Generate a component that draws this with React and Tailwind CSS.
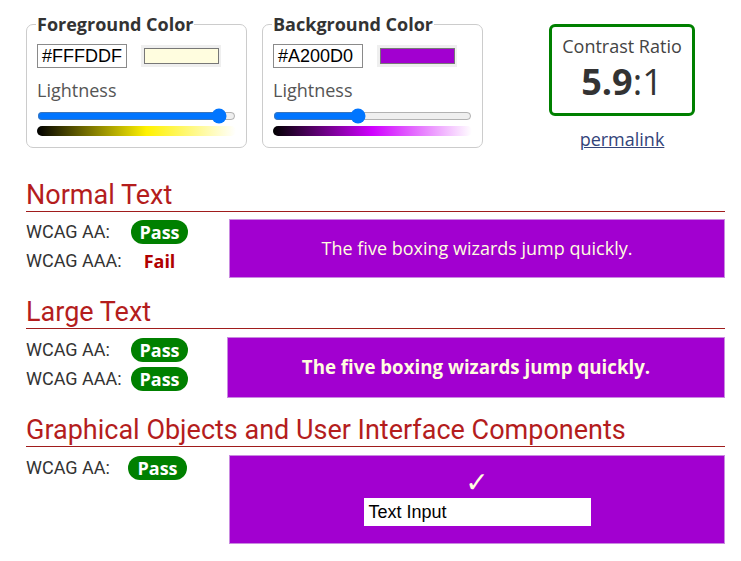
import React from "react";

function ColorField({ legend, hex, color, value, gradient }) {
  return (
    <fieldset className="w-[221px] border border-[#cccccc] rounded-[7px] pl-[10px] pr-[10px] pb-[11px] pt-0 m-0">
      <legend className="px-[1px] -ml-[1px] text-[18px] leading-[22px] font-bold text-[#333333] font-['Open_Sans',sans-serif]">
        {legend}
      </legend>
      <div className="flex items-center gap-[14px] mt-[9px]">
        <div className="w-[90px] h-[24px] border border-[#8a8a8a] flex items-center pl-[4px] text-[18px] text-black font-['Liberation_Sans',Arial,sans-serif]">
          {hex}
        </div>
        <div className="w-[80px] h-[22px] bg-[#efefef] flex items-center justify-center">
          <div className="w-[75px] h-[16px] border border-[#777777]" style={{ background: color }} />
        </div>
      </div>
      <div className="mt-[10px] text-[18px] leading-[24px] text-[#555555] font-['Open_Sans',sans-serif]">Lightness</div>
      <input
        type="range"
        min="0"
        max="100"
        defaultValue={value}
        className="block w-[199px] h-[16px] m-0 mt-[6px] accent-[#0075ff]"
      />
      <div className="w-[199px] h-[10px] rounded-[5px] mt-[2px]" style={{ background: gradient }} />
    </fieldset>
  );
}

function Badge({ children }) {
  return (
    <div className="w-[57px] h-[24px] rounded-full bg-[#008000] text-white font-bold text-[18px] leading-[24px] text-center font-['Open_Sans',sans-serif]">
      {children}
    </div>
  );
}

function Fail() {
  return (
    <div className="w-[57px] h-[24px] text-[#b00000] font-bold text-[18px] leading-[24px] text-center font-['Open_Sans',sans-serif]">
      Fail
    </div>
  );
}

function Heading({ children, className = "" }) {
  return (
    <div className={"border-b border-[#a01c1c] text-[27px] leading-[32px] text-[#b41d1d] font-['Roboto',sans-serif] " + className}>
      {children}
    </div>
  );
}

function Label({ children }) {
  return (
    <div className="w-[105px] text-[18px] leading-[24px] text-[#333333] font-['Roboto',sans-serif]">{children}</div>
  );
}

export default function App() {
  return (
    <div className="w-[741px] h-[561px] bg-white overflow-hidden font-['Open_Sans',sans-serif]">
      <div className="flex items-start pl-[26px] pt-[13px]">
        <ColorField
          legend="Foreground Color"
          hex="#FFFDDF"
          color="#FFFDDF"
          value={95}
          gradient="linear-gradient(to right, #000000, #fff200 55%, #ffffff)"
        />
        <div className="w-[15px]" />
        <ColorField
          legend="Background Color"
          hex="#A200D0"
          color="#A200D0"
          value={42}
          gradient="linear-gradient(to right, #000000, #d000ff 50%, #ffffff)"
        />
        <div className="ml-[66px] flex flex-col items-center pt-[11px]">
          <div className="w-[146px] h-[92px] border-[3px] border-[#008000] rounded-[6px] flex flex-col items-center">
            <div className="mt-[7px] text-[18px] leading-[24px] text-[#444444]">Contrast Ratio</div>
            <div className="text-[36px] leading-[40px] text-[#333333] mt-[4px]">
              <span className="font-bold">5.9</span>:1
            </div>
          </div>
          <a className="mt-[11px] text-[18px] leading-[24px] text-[#33447a] underline">permalink</a>
        </div>
      </div>

      <div className="pl-[26px] pr-[16px]">
        <Heading className="mt-[28px]">Normal Text</Heading>
        <div className="flex mt-[7px]">
          <div className="w-[203px] flex flex-col gap-[5px] pt-[1px]">
            <div className="flex items-center">
              <Label>WCAG AA:</Label>
              <Badge>Pass</Badge>
            </div>
            <div className="flex items-center">
              <Label>WCAG AAA:</Label>
              <Fail />
            </div>
          </div>
          <div className="flex-1 h-[59px] bg-[#A200D0] border border-[#c98ae0] flex items-center justify-center text-[18px] text-[#FFFDDF]">
            The five boxing wizards jump quickly.
          </div>
        </div>

        <Heading className="mt-[18px]">Large Text</Heading>
        <div className="flex mt-[8px]">
          <div className="w-[201px] flex flex-col gap-[5px] pt-[1px]">
            <div className="flex items-center">
              <Label>WCAG AA:</Label>
              <Badge>Pass</Badge>
            </div>
            <div className="flex items-center">
              <Label>WCAG AAA:</Label>
              <Badge>Pass</Badge>
            </div>
          </div>
          <div className="flex-1 h-[61px] bg-[#A200D0] border border-[#c98ae0] flex items-center justify-center text-[18.7px] font-bold text-[#FFFDDF]">
            The five boxing wizards jump quickly.
          </div>
        </div>

        <Heading className="mt-[16px]">Graphical Objects and User Interface Components</Heading>
        <div className="flex mt-[8px]">
          <div className="w-[203px] pt-[1px]">
            <div className="flex items-center">
              <div className="w-[102px] text-[18px] leading-[24px] text-[#333333] font-['Roboto',sans-serif]">WCAG AA:</div>
              <div className="w-[59px] h-[24px] rounded-full bg-[#008000] text-white font-bold text-[18px] leading-[24px] text-center">
                Pass
              </div>
            </div>
          </div>
          <div className="flex-1 h-[89px] bg-[#A200D0] border border-[#c98ae0] flex flex-col items-center pt-[12px]">
            <div className="text-[28px] leading-[30px] text-[#FFFDDF] font-['DejaVu_Sans',sans-serif]">✓</div>
            <div className="w-[227px] h-[28px] bg-white flex items-center pl-[5px] text-[18px] text-black font-['Liberation_Sans',Arial,sans-serif]">
              Text Input
            </div>
          </div>
        </div>
      </div>
    </div>
  );
}
